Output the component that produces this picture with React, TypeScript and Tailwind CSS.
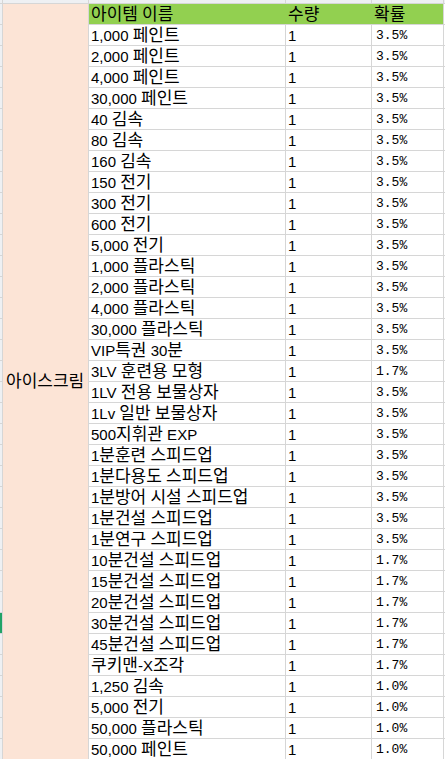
type Item = {
  name: string;
  pct: string;
};

const items: Item[] = [
  { name: "1,000 페인트", pct: "3.5%" },
  { name: "2,000 페인트", pct: "3.5%" },
  { name: "4,000 페인트", pct: "3.5%" },
  { name: "30,000 페인트", pct: "3.5%" },
  { name: "40 김속", pct: "3.5%" },
  { name: "80 김속", pct: "3.5%" },
  { name: "160 김속", pct: "3.5%" },
  { name: "150 전기", pct: "3.5%" },
  { name: "300 전기", pct: "3.5%" },
  { name: "600 전기", pct: "3.5%" },
  { name: "5,000 전기", pct: "3.5%" },
  { name: "1,000 플라스틱", pct: "3.5%" },
  { name: "2,000 플라스틱", pct: "3.5%" },
  { name: "4,000 플라스틱", pct: "3.5%" },
  { name: "30,000 플라스틱", pct: "3.5%" },
  { name: "VIP특권 30분", pct: "3.5%" },
  { name: "3LV 훈련용 모형", pct: "1.7%" },
  { name: "1LV 전용 보물상자", pct: "3.5%" },
  { name: "1Lv 일반 보물상자", pct: "3.5%" },
  { name: "500지휘관 EXP", pct: "3.5%" },
  { name: "1분훈련 스피드업", pct: "3.5%" },
  { name: "1분다용도 스피드업", pct: "3.5%" },
  { name: "1분방어 시설 스피드업", pct: "3.5%" },
  { name: "1분건설 스피드업", pct: "3.5%" },
  { name: "1분연구 스피드업", pct: "3.5%" },
  { name: "10분건설 스피드업", pct: "1.7%" },
  { name: "15분건설 스피드업", pct: "1.7%" },
  { name: "20분건설 스피드업", pct: "1.7%" },
  { name: "30분건설 스피드업", pct: "1.7%" },
  { name: "45분건설 스피드업", pct: "1.7%" },
  { name: "쿠키맨-X조각", pct: "1.7%" },
  { name: "1,250 김속", pct: "1.0%" },
  { name: "5,000 전기", pct: "1.0%" },
  { name: "50,000 플라스틱", pct: "1.0%" },
  { name: "50,000 페인트", pct: "1.0%" },
];

const cell = "flex items-end overflow-hidden whitespace-nowrap bg-white px-[2px] leading-[19px]";

// hangul runs are set a bit larger so widths match the sheet's font
function Ko({ text }: { text: string }) {
  return (
    <span>
      {text.split(/([\uAC00-\uD7A3]+)/).map((part, i) =>
        /[\uAC00-\uD7A3]/.test(part) ? (
          <span key={i} className="text-[17px]">
            {part}
          </span>
        ) : (
          part
        )
      )}
    </span>
  );
}

export default function App() {
  return (
    <div className="h-[759px] w-[445px] overflow-hidden bg-white font-['Liberation_Sans','Noto_Sans_CJK_KR',sans-serif] text-[15px] text-black">
      <div className="grid grid-cols-[2px_85px_196px_85px_71px_1px] grid-rows-[3px_repeat(36,20px)] gap-px bg-[#d6d6d6]">
        {/* top strip */}
        <div className="bg-[#eef0f3]" />
        <div className="bg-[#eef0f3]" />
        <div className="bg-[#eef0f3]" />
        <div className="bg-[#eef0f3]" />
        <div className="bg-[#eef0f3]" />
        <div className="bg-[#eef0f3]" />

        {/* merged category cell */}
        <div className="col-start-2 row-span-36 row-start-2 flex items-center bg-[#fce4d6] pl-[3px]">
          <Ko text="아이스크림" />
        </div>

        {/* header */}
        <div className="col-span-3 col-start-3 row-start-2 grid grid-cols-[197px_86px_71px] bg-[#92d050]">
          <div className="flex items-end px-[2px] leading-[19px]">
            <Ko text="아이템 이름" />
          </div>
          <div className="flex items-end px-[2px] leading-[19px]">
            <Ko text="수량" />
          </div>
          <div className="flex items-end px-[2px] leading-[19px]">
            <Ko text="확률" />
          </div>
        </div>
        <div className="bg-[#eef0f3]" />
        <div className="bg-white" />

        {items.map((item, i) => (
          <Row key={i} item={item} marked={i === 28} />
        ))}
      </div>
    </div>
  );
}

function Row({ item, marked }: { item: Item; marked: boolean }) {
  return (
    <>
      <div className={marked ? "bg-[#21a366]" : "bg-[#eef0f3]"} />
      <div className={cell}>
        <Ko text={item.name} />
      </div>
      <div className={cell}>1</div>
      <div className={`${cell} pl-[4px] font-['Liberation_Mono',monospace] text-[13px]`}>{item.pct}</div>
      <div className="bg-white" />
    </>
  );
}
